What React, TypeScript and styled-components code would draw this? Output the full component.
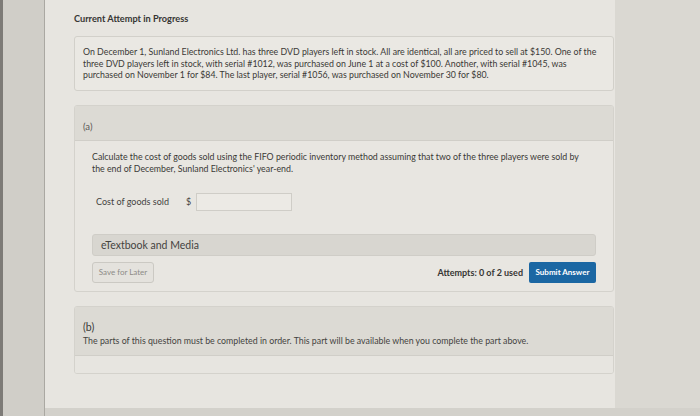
import React from 'react';
import styled, { createGlobalStyle } from 'styled-components';

const GlobalStyle = createGlobalStyle`
  html, body {
    margin: 0;
    padding: 0;
    background: #dcdad4;
    font-family: Lato, "Open Sans", "Liberation Sans", sans-serif;
  }
  * { box-sizing: border-box; }
`;

const App: React.FC = () => {
  return (
    <>
      <GlobalStyle />
      <Screen>
        <Rail />
        <Main>
          <Row>
            <Page>
              <Title>Current Attempt in Progress</Title>
              <ProblemBox>
                On December 1, Sunland Electronics Ltd. has three DVD players left in stock. All are identical, all are priced to sell at $150. One of the
                <br />
                three DVD players left in stock, with serial #1012, was purchased on June 1 at a cost of $100. Another, with serial #1045, was
                <br />
                purchased on November 1 for $84. The last player, serial #1056, was purchased on November 30 for $80.
              </ProblemBox>

              <Part>
                <PartHeader tall={false}>
                  <PartLabel>(a)</PartLabel>
                </PartHeader>
                <PartBody>
                  <Instruction>
                    Calculate the cost of goods sold using the FIFO periodic inventory method assuming that two of the three players were sold by
                    <br />
                    the end of December, Sunland Electronics' year-end.
                  </Instruction>
                  <CostRow>
                    <CostLabel>Cost of goods sold</CostLabel>
                    <Dollar>$</Dollar>
                    <AmountInput type="text" />
                  </CostRow>
                  <MediaBar>eTextbook and Media</MediaBar>
                  <Actions>
                    <SaveButton>Save for Later</SaveButton>
                    <Attempts>Attempts: 0 of 2 used</Attempts>
                    <SubmitButton>Submit Answer</SubmitButton>
                  </Actions>
                </PartBody>
              </Part>

              <Part>
                <PartHeader tall={true}>
                  <PartLabel dark>(b)</PartLabel>
                  <Locked>The parts of this question must be completed in order. This part will be available when you complete the part above.</Locked>
                </PartHeader>
                <EmptyBody />
              </Part>
            </Page>
            <Gutter />
          </Row>
          <Footer />
        </Main>
      </Screen>
    </>
  );
};

export default App;

const Screen = styled.div`
  display: flex;
  width: 700px;
  height: 416px;
  overflow: hidden;
`;

const Rail = styled.div`
  width: 45px;
  flex-shrink: 0;
  background: #d0cec8;
  border-left: 3px solid #7d7b77;
  border-right: 1px solid #aaa8a2;
`;

const Main = styled.div`
  flex: 1;
  display: flex;
  flex-direction: column;
`;

const Row = styled.div`
  flex: 1;
  display: flex;
`;

const Page = styled.div`
  width: 570px;
  flex-shrink: 0;
  background: #e7e5e0;
  padding: 13px 0 0 29px;
  display: flex;
  flex-direction: column;
`;

const Gutter = styled.div`
  flex: 1;
  background: #dad8d2;
`;

const Footer = styled.div`
  height: 8px;
  background: #d3d1cb;
`;

const Title = styled.div`
  font-size: 9.2px;
  line-height: 12px;
  font-weight: 700;
  color: #363533;
`;

const ProblemBox = styled.div`
  margin-top: 11px;
  width: 540px;
  padding: 9px 9px 9px 8px;
  background: #eae8e3;
  border: 1px solid #d2d0ca;
  border-radius: 3px;
  font-size: 8.8px;
  line-height: 11.5px;
  white-space: nowrap;
  color: #3a3936;
`;

const Part = styled.div`
  margin-top: 14px;
  width: 540px;
  border: 1px solid #d4d2cc;
  border-radius: 3px;
  overflow: hidden;
  background: #e8e6e1;
`;

const PartHeader = styled.div<{ tall: boolean }>`
  height: ${({ tall }) => (tall ? '49px' : '35px')};
  padding: ${({ tall }) => (tall ? '14px 8px 0' : '15px 8px 0')};
  background: #dcdad4;
  border-bottom: 1px solid #d0cec8;
`;

const PartLabel = styled.div<{ dark?: boolean }>`
  font-size: ${({ dark }) => (dark ? '10.5px' : '9.5px')};
  line-height: 12px;
  color: ${({ dark }) => (dark ? '#3a3937' : '#5a5956')};
`;

const Locked = styled.div`
  margin-top: 2px;
  font-size: 8.8px;
  line-height: 12px;
  white-space: nowrap;
  color: #44433f;
`;

const PartBody = styled.div`
  padding: 10px 17px 8px 17px;
`;

const EmptyBody = styled.div`
  height: 17px;
  background: #e7e5e0;
`;

const Instruction = styled.div`
  font-size: 8.8px;
  line-height: 12px;
  white-space: nowrap;
  color: #3a3936;
`;

const CostRow = styled.div`
  margin-top: 18px;
  display: flex;
  align-items: center;
  height: 18px;
  padding-left: 4px;
`;

const CostLabel = styled.span`
  width: 90px;
  font-size: 9px;
  color: #44433f;
`;

const Dollar = styled.span`
  width: 10px;
  font-size: 9px;
  color: #44433f;
`;

const AmountInput = styled.input`
  width: 96px;
  height: 18px;
  border: 1px solid #cfcdc7;
  background: #eceae5;
  outline: none;
  padding: 0;
`;

const MediaBar = styled.div`
  margin-top: 23px;
  height: 22px;
  display: flex;
  align-items: center;
  padding-left: 8px;
  background: #d8d6d0;
  border: 1px solid #cfcdc7;
  border-radius: 3px;
  font-size: 10.5px;
  color: #44433f;
`;

const Actions = styled.div`
  margin-top: 6px;
  height: 21px;
  display: flex;
  align-items: center;
`;

const SaveButton = styled.button`
  width: 62px;
  height: 21px;
  padding: 0;
  border: 1px solid #cbc9c3;
  border-radius: 3px;
  background: #e4e2dd;
  font-family: inherit;
  font-size: 8px;
  color: #8d8b87;
`;

const Attempts = styled.span`
  margin-left: auto;
  margin-right: 6px;
  font-size: 9px;
  font-weight: 700;
  color: #363533;
`;

const SubmitButton = styled.button`
  width: 67px;
  height: 21px;
  padding: 0;
  border: none;
  border-radius: 2px;
  background: #1b67a3;
  font-family: inherit;
  font-size: 8px;
  font-weight: 700;
  color: #ffffff;
`;
